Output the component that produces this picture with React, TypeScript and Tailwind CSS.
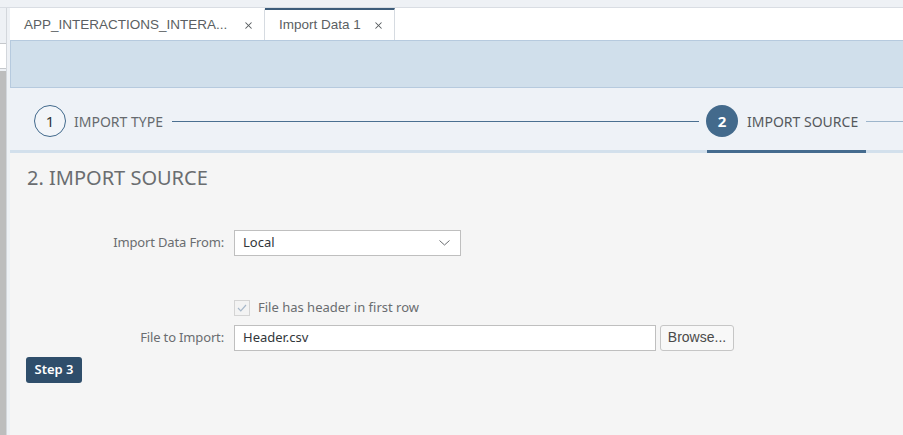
import { X } from 'lucide-react';

// ── Small pieces ──────────────────────────────────────────────────────────────

function Tab({ label, active, width }: { label: string; active?: boolean; width: string }) {
  return (
    <div
      className={`flex items-center justify-between h-full border-r border-[#d6dbe1] pl-[14px] pr-[10px] ${width} ${
        active ? 'border-t-2 border-t-[#3d5c7a]' : 'border-t-2 border-t-transparent'
      }`}
    >
      <span className="font-['Liberation_Sans',Arial,sans-serif] text-[13.5px] text-[#5b5f63] whitespace-nowrap">
        {label}
      </span>
      <X className="w-[11px] h-[11px] text-[#55595d]" strokeWidth={2.2} />
    </div>
  );
}

function StepCircle({ n, active }: { n: number; active?: boolean }) {
  return (
    <span
      className={`flex-shrink-0 w-[32px] h-[32px] rounded-full flex items-center justify-center text-[15px] ${
        active
          ? 'bg-[#436a8c] text-white font-bold'
          : 'border border-[#41698c] text-[#32363a] bg-[#f2f5f9]'
      }`}
    >
      {n}
    </span>
  );
}

function FormRow({ label, children }: { label?: string; children: React.ReactNode }) {
  return (
    <div className="flex items-center">
      <div className="w-[208px] flex-shrink-0 text-right text-[13px] text-[#6a6d70] pr-[10px] tracking-[-0.15px]">
        {label}
      </div>
      {children}
    </div>
  );
}

// ── Page ──────────────────────────────────────────────────────────────────────

export default function App() {
  return (
    <div className="w-[903px] h-[435px] overflow-hidden flex flex-col bg-[#eef1f5] font-['Noto_Sans',sans-serif]">
      {/* top strip */}
      <div className="h-[8px] flex-shrink-0 bg-[#eef1f5] border-b border-[#d9dde3]" />

      <div className="flex flex-1 min-h-0">
        {/* left side strip */}
        <div className="w-[7px] flex-shrink-0 flex flex-col border-r border-[#d3d7dc]">
          <div className="h-[35px] bg-[#eef1f5]" />
          <div className="h-[26px] bg-white border-y border-[#c5c8cc]" />
          <div className="h-[2px]" />
          <div className="flex-1 bg-[#bdbdbd]" />
        </div>

        <div className="flex-1 min-w-0 pl-[3px] flex flex-col">
          {/* tabs */}
          <div className="h-[32px] flex-shrink-0 flex bg-white">
            <Tab label="APP_INTERACTIONS_INTERA..." width="w-[255px]" />
            <Tab label="Import Data 1" active width="w-[130px]" />
          </div>

          {/* blue header band */}
          <div className="h-[48px] flex-shrink-0 bg-[#d0dfeb] border border-r-0 border-[#b6cade]" />

          {/* wizard steps */}
          <div className="h-[65px] flex-shrink-0 bg-[#eef2f7] border-b-[3px] border-[#d3e0ec] flex items-center pl-[24px] pt-[4px]">
            <div className="flex items-center gap-[8px]">
              <StepCircle n={1} />
              <span className="text-[14px] text-[#666a6e]">IMPORT TYPE</span>
            </div>
            <div className="flex-1 h-px bg-[#4a6f90] ml-[9px] mr-[7px]" />
            <div className="relative w-[160px] flex-shrink-0 flex items-center gap-[9px] self-stretch">
              <StepCircle n={2} active />
              <span className="text-[14px] text-[#55595d]">IMPORT SOURCE</span>
              <div className="absolute left-[1px] right-0 -bottom-[3px] h-[3px] bg-[#456b8e]" />
            </div>
            <div className="w-[37px] flex-shrink-0 h-px bg-[#9db5cb]" />
          </div>

          {/* content */}
          <div className="flex-1 bg-[#f5f5f5] pl-[16px] pt-[11px]">
            <h2 className="text-[20px] leading-[28px] text-[#6a6d70] ml-[1px]">2. IMPORT SOURCE</h2>

            <div className="mt-[38px]">
              <FormRow label="Import Data From:">
                <div className="w-[227px] h-[26px] bg-white border border-[#bfbfbf] flex items-center justify-between pl-[8px] pr-[10px]">
                  <span className="text-[13px] text-[#32363a]">Local</span>
                  <svg className="w-[11px] h-[6px]" viewBox="0 0 11 6" fill="none">
                    <path d="M0.5 0.5 L5.5 5 L10.5 0.5" stroke="#6a6d70" strokeWidth="1" />
                  </svg>
                </div>
              </FormRow>
            </div>

            <div className="mt-[42px]">
              <FormRow>
                <div className="flex items-center gap-[8px]">
                  <span className="w-[16px] h-[16px] border border-[#d4d4d4] bg-[#f3f3f3] flex items-center justify-center">
                    <svg className="w-[10px] h-[8px]" viewBox="0 0 10 8" fill="none">
                      <path d="M1 4 L3.8 6.8 L9 1" stroke="#a7b8ca" strokeWidth="1.2" />
                    </svg>
                  </span>
                  <span className="text-[13px] text-[#6a6d70]">File has header in first row</span>
                </div>
              </FormRow>
            </div>

            <div className="mt-[7px]">
              <FormRow label="File to Import:">
                <div className="w-[422px] h-[26px] bg-white border border-[#bfbfbf] flex items-center pl-[8px]">
                  <span className="text-[13px] text-[#32363a]">Header.csv</span>
                </div>
                <button className="ml-[4px] w-[74px] h-[26px] rounded-[3px] bg-[#f8f8f8] border border-[#c6c6c6] font-['Liberation_Sans',Arial,sans-serif] text-[14px] text-[#4a4a4a]">
                  Browse...
                </button>
              </FormRow>
            </div>

            <button className="mt-[6px] w-[56px] h-[26px] rounded-[3px] bg-[#2f4e6b] text-white text-[13px] font-semibold">
              Step 3
            </button>
          </div>
        </div>
      </div>
    </div>
  );
}
